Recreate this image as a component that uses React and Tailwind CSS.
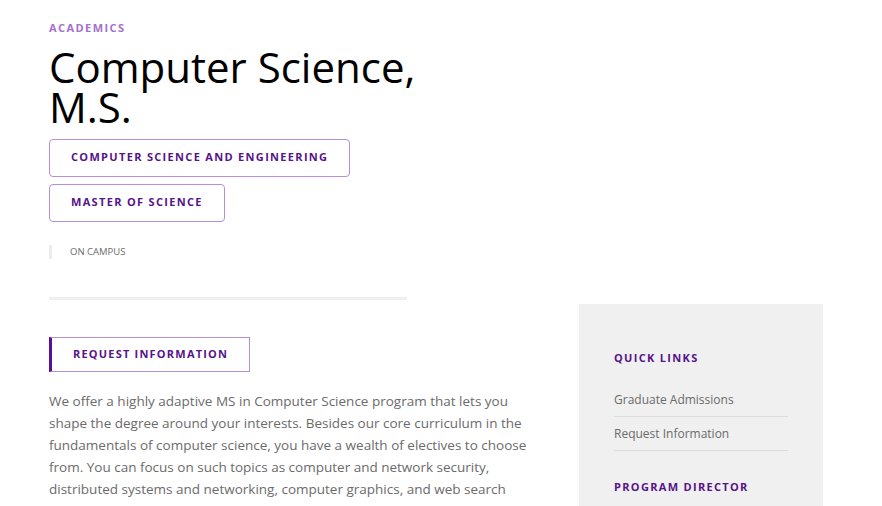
import React from "react";

const font = { fontFamily: '"Open Sans", "Noto Sans", sans-serif' };

const Tag = ({ children }) => (
    <div className="inline-flex h-[38px] items-center rounded-[4px] border border-[#b98ed9] px-[21px] text-[11px] font-bold uppercase tracking-[0.12em] text-[#56138a]">
        {children}
    </div>
);

const QuickLink = ({ children }) => (
    <div className="border-b border-[#dcdcdc] pb-[8px] pt-[9px] text-[12px] leading-[16px] text-[#6b6b6b]">{children}</div>
);

export default function App() {
    return (
        <div className="min-h-[506px] w-[882px] overflow-hidden bg-white" style={font}>
            <div className="pl-[49px] pt-[20px]">
                {/* Header */}
                <div className="text-[11px] font-bold uppercase tracking-[0.13em] text-[#a56fcf]">Academics</div>
                <h1 className="mt-[10px] text-[42px] font-normal leading-[40px] text-black">
                    Computer Science,
                    <br />
                    M.S.
                </h1>

                <div className="mt-[12px] flex flex-col items-start gap-[7px]">
                    <Tag>Computer Science and Engineering</Tag>
                    <Tag>Master of Science</Tag>
                </div>

                <div className="mt-[23px] flex items-center">
                    <div className="h-[14px] w-[3px] bg-[#ececec]" />
                    <div className="ml-[18px] text-[9.5px] uppercase text-[#6b6b6b]">On campus</div>
                </div>

                <div className="mt-[38px] flex items-start">
                    {/* Main column */}
                    <div className="w-[480px]">
                        <div className="h-[3px] w-[358px] bg-[#f0f0f0]" />
                        <div className="mt-[37px] inline-flex h-[35px] items-center border border-l-[3px] border-[#b98ed9] border-l-[#5a0f94] px-[21px] text-[11px] font-bold uppercase tracking-[0.11em] text-[#56138a]">
                            Request Information
                        </div>
                        <p className="mt-[18px] text-[13.5px] leading-[22px] text-[#6b6b6b]">
                            We offer a highly adaptive MS in Computer Science program that lets you shape the degree
                            around your interests. Besides our core curriculum in the fundamentals of computer science,
                            you have a wealth of electives to choose from. You can focus on such topics as computer and
                            network security, distributed systems and networking, computer graphics, and web search
                        </p>
                    </div>

                    {/* Sidebar */}
                    <div className="ml-[50px] mt-[7px] h-[220px] w-[244px] bg-[#f0f0f0] px-[35px] pt-[46px]">
                        <div className="text-[11px] font-bold uppercase tracking-[0.12em] text-[#56138a]">Quick Links</div>
                        <div className="mt-[17px] w-[174px]">
                            <QuickLink>Graduate Admissions</QuickLink>
                            <QuickLink>Request Information</QuickLink>
                        </div>
                        <div className="mt-[28px] text-[11px] font-bold uppercase tracking-[0.12em] text-[#56138a]">Program Director</div>
                    </div>
                </div>
            </div>
        </div>
    );
}
